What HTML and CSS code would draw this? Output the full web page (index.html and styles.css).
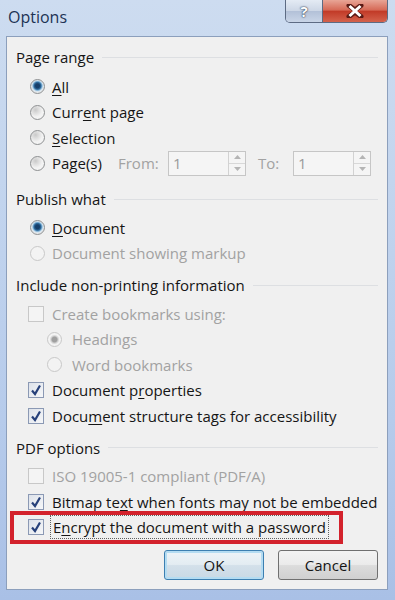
FILE: index.html
```html
<!DOCTYPE html>
<html>
<head>
  <title>Options</title>
  <link rel="stylesheet" href="styles.css">
</head>
<body>
  <div class="window">
    <div class="titlebar">
      <span class="title">Options</span>
      <div class="caption-buttons">
        <span class="cap-btn help">?</span>
        <span class="cap-btn close">
          <svg width="18" height="14" viewBox="0 0 18 14">
            <path d="M3 1.5 L9 6 L15 1.5 M3 12.5 L9 8 L15 12.5" stroke="#5a1a14" stroke-width="5" fill="none" stroke-linecap="round"/>
            <path d="M3.5 2 L9 7 L14.5 2 M3.5 12 L9 7 L14.5 12" stroke="#ffffff" stroke-width="3" fill="none"/>
          </svg>
        </span>
      </div>
    </div>

    <div class="client">
      <div class="group-title"><span>Page range</span></div>
      <div class="options first">
        <div class="row"><span class="radio checked"></span><span class="label"><u>A</u>ll</span></div>
        <div class="row"><span class="radio"></span><span class="label">Curr<u>e</u>nt page</span></div>
        <div class="row"><span class="radio"></span><span class="label"><u>S</u>election</span></div>
        <div class="row">
          <span class="radio"></span><span class="label page-label">Pa<u>g</u>e(s)</span>
          <span class="field-label">From:</span>
          <span class="spin">
            <span class="spin-value">1</span>
            <span class="spin-arrows">
              <span class="arrow"><svg width="7" height="4" viewBox="0 0 7 4"><path d="M0 4 L3.5 0 L7 4 Z" fill="#b5b5b5"/></svg></span>
              <span class="arrow"><svg width="7" height="4" viewBox="0 0 7 4"><path d="M0 0 L3.5 4 L7 0 Z" fill="#b5b5b5"/></svg></span>
            </span>
          </span>
          <span class="field-label to">To:</span>
          <span class="spin">
            <span class="spin-value">1</span>
            <span class="spin-arrows">
              <span class="arrow"><svg width="7" height="4" viewBox="0 0 7 4"><path d="M0 4 L3.5 0 L7 4 Z" fill="#b5b5b5"/></svg></span>
              <span class="arrow"><svg width="7" height="4" viewBox="0 0 7 4"><path d="M0 0 L3.5 4 L7 0 Z" fill="#b5b5b5"/></svg></span>
            </span>
          </span>
        </div>
      </div>

      <div class="group-title publish"><span>Publish what</span></div>
      <div class="options">
        <div class="row"><span class="radio checked"></span><span class="label"><u>D</u>ocument</span></div>
        <div class="row disabled"><span class="radio"></span><span class="label">Document showing markup</span></div>
      </div>

      <div class="group-title"><span>Include non-printing information</span></div>
      <div class="options">
        <div class="row check-row disabled"><span class="checkbox"></span><span class="label">Create bookmarks using:</span></div>
        <div class="row sub-row disabled"><span class="radio checked"></span><span class="label">Headings</span></div>
        <div class="row sub-row disabled"><span class="radio"></span><span class="label">Word bookmarks</span></div>
        <div class="row check-row">
          <span class="checkbox"><svg width="14" height="14" viewBox="0 0 14 14"><path d="M3 7.5 L6 11 L11 2.5" stroke="#26407a" stroke-width="2.2" fill="none"/></svg></span>
          <span class="label">Document p<u>r</u>operties</span>
        </div>
        <div class="row check-row">
          <span class="checkbox"><svg width="14" height="14" viewBox="0 0 14 14"><path d="M3 7.5 L6 11 L11 2.5" stroke="#26407a" stroke-width="2.2" fill="none"/></svg></span>
          <span class="label">Docu<u>m</u>ent structure tags for accessibility</span>
        </div>
      </div>

      <div class="group-title"><span>PDF options</span></div>
      <div class="options">
        <div class="row check-row disabled"><span class="checkbox"></span><span class="label">ISO 19005-1 compliant (PDF/A)</span></div>
        <div class="row check-row">
          <span class="checkbox"><svg width="14" height="14" viewBox="0 0 14 14"><path d="M3 7.5 L6 11 L11 2.5" stroke="#26407a" stroke-width="2.2" fill="none"/></svg></span>
          <span class="label">Bitmap te<u>x</u>t when fonts may not be embedded</span>
        </div>
        <div class="row check-row highlight">
          <span class="checkbox"><svg width="14" height="14" viewBox="0 0 14 14"><path d="M3 7.5 L6 11 L11 2.5" stroke="#26407a" stroke-width="2.2" fill="none"/></svg></span>
          <span class="label focused">E<u>n</u>crypt the document with a password</span>
        </div>
      </div>

      <div class="buttons">
        <button class="btn default">OK</button>
        <button class="btn">Cancel</button>
      </div>
    </div>
  </div>
</body>
</html>
```

FILE: styles.css
```css
body {
  margin: 0;
  font-family: "Open Sans", "Noto Sans", sans-serif;
}
.window {
  width: 395px;
  height: 600px;
  display: flex;
  flex-direction: column;
  background: linear-gradient(180deg, #cddcf0 0%, #c3d5ee 30%, #b6cbeb 70%, #a9c0e6 100%);
}
.titlebar {
  height: 36px;
  display: flex;
  justify-content: space-between;
  align-items: flex-start;
  padding: 0 7px 0 8px;
  flex-shrink: 0;
}
.title {
  font-size: 16px;
  line-height: 34px;
  color: #1d3354;
}
.caption-buttons {
  display: flex;
  height: 22px;
  border: 1px solid #5d6b83;
  border-top: none;
  border-radius: 0 0 5px 5px;
  overflow: hidden;
}
.cap-btn {
  display: flex;
  align-items: center;
  justify-content: center;
}
.help {
  width: 36px;
  border-right: 1px solid #5d6b83;
  background: linear-gradient(180deg, #e4ebf4 0%, #cdd7e6 48%, #b3c1d8 52%, #c9d5e7 100%);
  font-size: 15px;
  font-weight: bold;
  color: #ffffff;
  text-shadow: 0 0 2px #27344d, 0 0 1px #27344d;
}
.close {
  width: 64px;
  background: linear-gradient(180deg, #e8a596 0%, #d66a57 45%, #c23b28 52%, #d4624c 100%);
}
.client {
  flex: 1;
  margin: 0 7px 10px 6px;
  background: #f0f0f0;
  border: 1px solid #8c9fbc;
  padding: 8px 9px 0;
  font-size: 15px;
  color: #151515;
}
.group-title {
  display: flex;
  align-items: center;
  height: 24px;
  gap: 8px;
  margin-top: 7px;
}
.group-title:first-child {
  margin-top: 0;
}
.group-title.publish {
  margin-top: 11px;
}
.group-title::after {
  content: "";
  flex: 1;
  border-top: 1px solid #dddfe2;
}
.options {
  margin-top: 4px;
}
.options.first {
  margin-top: 5px;
}
.row {
  height: 25.5px;
  display: flex;
  align-items: center;
  gap: 7px;
  padding-left: 14px;
}
.row.check-row {
  padding-left: 12px;
  gap: 8px;
}
.row.sub-row {
  padding-left: 31px;
  gap: 10px;
}
.row.disabled {
  color: #a2a2a2;
}
u {
  text-underline-offset: 2px;
}
.radio {
  width: 13px;
  height: 13px;
  border-radius: 50%;
  border: 1px solid #8e9092;
  background: radial-gradient(circle at 35% 30%, #c9c9c9 0, #dcdcdc 3px, #f3f3f3 7px);
  flex-shrink: 0;
}
.radio.checked {
  background: radial-gradient(circle at 50% 45%, #163f6a 0 2px, #2d6a9c 3.5px, #7fb1d6 4.5px, #d6e4ee 5.5px, #e9e9e9 7px);
}
.disabled .radio {
  border-color: #c8c8c8;
  background: #f3f3f3;
}
.disabled .radio.checked {
  background: radial-gradient(circle at 50% 50%, #a0a0a0 0 2.5px, #cfcfcf 3.5px, #f3f3f3 5px);
}
.checkbox {
  width: 14px;
  height: 14px;
  border: 1px solid #8b99b4;
  background: linear-gradient(135deg, #dde2ea 0%, #f6f7f9 100%);
  display: flex;
  align-items: center;
  justify-content: center;
  flex-shrink: 0;
}
.disabled .checkbox {
  border-color: #c8c8c8;
  background: #f4f4f4;
}
.page-label {
  width: 59px;
}
.field-label {
  color: #a2a2a2;
  width: 43px;
}
.field-label.to {
  margin-left: 5px;
  width: 28px;
}
.spin {
  width: 76px;
  height: 23px;
  border: 1px solid #c6c6c6;
  background: #f5f5f5;
  display: flex;
  color: #9a9a9a;
}
.spin-value {
  flex: 1;
  padding-left: 4px;
  line-height: 23px;
}
.spin-arrows {
  width: 16px;
  border-left: 1px solid #d2d2d2;
  display: flex;
  flex-direction: column;
}
.arrow {
  flex: 1;
  display: flex;
  align-items: center;
  justify-content: center;
}
.arrow:first-child {
  border-bottom: 1px solid #d8d8d8;
}
.highlight {
  position: relative;
}
.highlight::after {
  content: "";
  position: absolute;
  left: -6px;
  top: -4px;
  bottom: -4px;
  width: 325px;
  border: 4px solid #d3222c;
}
.focused {
  outline: 1px dotted #606060;
  outline-offset: 1px;
  padding: 0 1px;
}
.buttons {
  display: flex;
  justify-content: flex-end;
  gap: 14px;
  margin-top: 9.5px;
}
.btn {
  width: 100px;
  height: 30px;
  border: 1px solid #707070;
  border-radius: 3px;
  background: linear-gradient(180deg, #f3f3f3 0%, #ebebeb 48%, #dcdcdc 52%, #d0d0d0 100%);
  font-family: inherit;
  font-size: 15px;
  color: #151515;
}
.btn.default {
  border-color: #3c7fb1;
  box-shadow: inset 0 0 0 2px #b4dcf2;
  background: linear-gradient(180deg, #eef4f8 0%, #e3ecf2 48%, #d3e0ea 52%, #c9d9e5 100%);
}
```
